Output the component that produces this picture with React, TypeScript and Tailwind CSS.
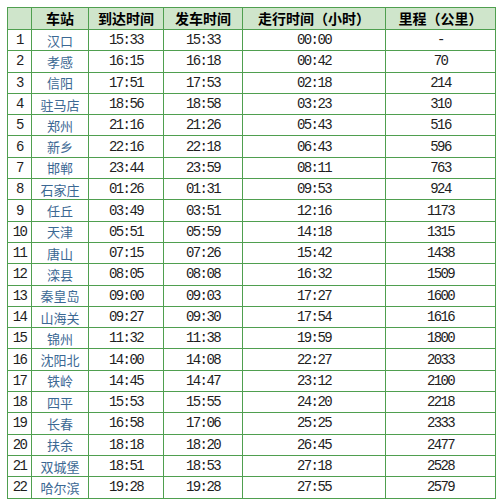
const rows: [string, string, string, string, string][] = [
  ["汉口", "15:33", "15:33", "00:00", "-"],
  ["孝感", "16:15", "16:18", "00:42", "70"],
  ["信阳", "17:51", "17:53", "02:18", "214"],
  ["驻马店", "18:56", "18:58", "03:23", "310"],
  ["郑州", "21:16", "21:26", "05:43", "516"],
  ["新乡", "22:16", "22:18", "06:43", "596"],
  ["邯郸", "23:44", "23:59", "08:11", "763"],
  ["石家庄", "01:26", "01:31", "09:53", "924"],
  ["任丘", "03:49", "03:51", "12:16", "1173"],
  ["天津", "05:51", "05:59", "14:18", "1315"],
  ["唐山", "07:15", "07:26", "15:42", "1438"],
  ["滦县", "08:05", "08:08", "16:32", "1509"],
  ["秦皇岛", "09:00", "09:03", "17:27", "1600"],
  ["山海关", "09:27", "09:30", "17:54", "1616"],
  ["锦州", "11:32", "11:38", "19:59", "1800"],
  ["沈阳北", "14:00", "14:08", "22:27", "2033"],
  ["铁岭", "14:45", "14:47", "23:12", "2100"],
  ["四平", "15:53", "15:55", "24:20", "2218"],
  ["长春", "16:58", "17:06", "25:25", "2333"],
  ["扶余", "18:18", "18:20", "26:45", "2477"],
  ["双城堡", "18:51", "18:53", "27:18", "2528"],
  ["哈尔滨", "19:28", "19:28", "27:55", "2579"],
];

const cell = "border border-[#4f9f4f] text-center p-0";
const mono = "font-['Liberation_Mono',monospace] text-[14px] tracking-[-1.6px] text-[#1e1e1e]";
const cjk = "font-['Noto_Sans_CJK_SC',sans-serif]";

export default function App() {
  return (
    <div className="h-[499px] w-[500px] bg-white pl-[7px] pt-[7px]">
      <table className="w-[488px] table-fixed border-collapse">
        <colgroup>
          <col className="w-[24px]" />
          <col className="w-[57px]" />
          <col className="w-[75px]" />
          <col className="w-[79px]" />
          <col className="w-[143px]" />
          <col className="w-[110px]" />
        </colgroup>
        <thead>
          <tr className={`h-[21.3px] bg-[#cfe5cb] text-[14px] font-bold text-black ${cjk}`}>
            <th className={cell}></th>
            <th className={cell}>车站</th>
            <th className={cell}>到达时间</th>
            <th className={cell}>发车时间</th>
            <th className={cell}>走行时间（小时）</th>
            <th className={cell}>里程（公里）</th>
          </tr>
        </thead>
        <tbody>
          {rows.map((r, i) => (
            <tr key={i} className="h-[21.3px] leading-none">
              <td className={`${cell} ${mono}`}>{i + 1}</td>
              <td className={`${cell} ${cjk} text-[13px] text-[#3b6893]`}>{r[0]}</td>
              <td className={`${cell} ${mono}`}>{r[1]}</td>
              <td className={`${cell} ${mono}`}>{r[2]}</td>
              <td className={`${cell} ${mono}`}>{r[3]}</td>
              <td className={`${cell} ${mono}`}>{r[4]}</td>
            </tr>
          ))}
        </tbody>
      </table>
    </div>
  );
}
